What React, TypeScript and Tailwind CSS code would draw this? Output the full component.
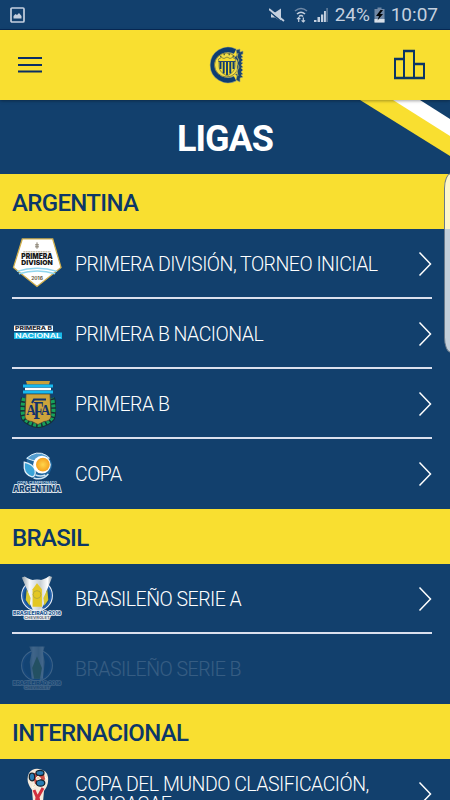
import type { ReactNode } from "react"

type League = {
  name: string
  logo: ReactNode
  disabled?: boolean
}

type Section = {
  title: string
  leagues: League[]
}

function ClubCrest() {
  return (
    <svg className="ml-px" width="36" height="38" viewBox="0 0 36 38" fill="none">
      <path d="M27 5.500A15.200 15.200 0 1 0 27 32.500" stroke="#8d9a7c" strokeWidth="6" />
      <path d="M27 5.500A15.200 15.200 0 1 0 27 32.500" stroke="#0d3d72" strokeWidth="4.600" />
      <circle cx="18.500" cy="19" r="12" fill="#f4df45" stroke="#857f40" strokeWidth="1" />
      <path d="M10.500 13l3-1.500 2.500 1 3-1.500 3 1.500 2.500-1 3 1.500c-1 4 0 7-1 10-1 3-4 5-7.500 7-3.500-2-6.500-4-7.500-7-1-3 0-6-1-10z" fill="#f9df30" stroke="#6d7545" strokeWidth=".8" />
      <path d="M12.500 16v7M15.700 16v11.500M19 16v13M22.300 16v11.500M25.500 16v7" stroke="#0d3d72" strokeWidth="1.900" />
      <path d="M10.500 15.500h17" stroke="#24466e" strokeWidth="1" />
      <path d="M12 10.500h1.500M15.500 8.500h1.500M20.500 8.500H22M24.500 10.500H26" stroke="#55683f" strokeWidth="1.500" />
      <path d="M28 4l4-1v3l3-1v3l-2 1 2 2-2 1 2 2-2 2 2 1-2 2 2 2-2 1 2 2-2 2 2 2-2 1 2 2-3 1v4l-4-2 1-4-2-2h2V14l-3-2 3-3z" fill="#1c456d" stroke="#a3a674" strokeWidth=".6" />
      <path d="M30 7l-1 4 2 3-2 3 2 4-2 4 1 5" stroke="#cfc354" strokeWidth=".8" />
    </svg>
  )
}

function PrimeraDivisionLogo() {
  return (
    <svg width="52" height="52" viewBox="0 0 52 52">
      <path d="M10.500 1.500h31L50 30.500 25.500 50 1.500 30.500z" fill="#fff" stroke="#d3b04c" strokeWidth="1.300" />
      <path d="M25.500 5v6.500M23.500 7.500h4M23.500 9.500h4" stroke="#827968" strokeWidth="1" />
      <path d="M11.500 14.500h28" stroke="#c6bca6" strokeWidth="1.400" strokeDasharray="2 .5" />
      <text x="25.500" y="22" fontSize="7.200" fontWeight="900" textAnchor="middle" textLength="32" lengthAdjust="spacingAndGlyphs" fill="#171717" fontFamily="Inter">PRIMERA</text>
      <text x="25.500" y="28" fontSize="6.800" fontWeight="900" textAnchor="middle" textLength="32" lengthAdjust="spacingAndGlyphs" fill="#171717" fontFamily="Inter">DIVISION</text>
      <path d="M5 34.500q20.500-6.500 41 0M7 37q19-5.500 37 0" fill="none" stroke="#8fd5ed" strokeWidth="1.500" />
      <text x="25.500" y="43.500" fontSize="5" fontWeight="700" textAnchor="middle" textLength="12" lengthAdjust="spacingAndGlyphs" fill="#65573d" fontFamily="Inter">2016</text>
    </svg>
  )
}

function PrimeraNacionalLogo() {
  return (
    <svg className="mb-[3px]" width="50" height="16" viewBox="0 0 50 16">
      <rect x="1" y="1.500" width="39" height="5.500" fill="#fff" />
      <rect x="1" y="8.500" width="48" height="6.500" fill="#18b9e8" />
      <text x="2" y="6" fontSize="4.800" fontWeight="800" textLength="37" lengthAdjust="spacingAndGlyphs" fill="#1b2937" fontFamily="Inter">PRIMERA B</text>
      <text x="2" y="13.800" fontSize="5.500" fontWeight="600" textLength="46" lengthAdjust="spacingAndGlyphs" fill="#fff" fontFamily="Inter">NACIONAL</text>
    </svg>
  )
}

function AfaLogo() {
  return (
    <svg className="mt-px" width="36" height="48" viewBox="0 0 36 48">
      <path d="M4 18Q1 30 4 38q5 6 14 7 9-1 14-7 3-8 0-20" fill="none" stroke="#172e36" strokeWidth="6" />
      <path d="M4 18Q1 30 4 38q5 6 14 7 9-1 14-7 3-8 0-20" fill="none" stroke="#16a05a" strokeWidth="4" strokeDasharray="3 1.500" />
      <path d="M6 1h24l-1 3.500H7z" fill="#c9a039" />
      <path d="M6 14h24l1 23q-1 4-7 4.500l-6 3-6-3q-6-.5-7-4.500z" fill="#cda43b" stroke="#473f32" strokeWidth=".7" />
      <path d="M3 6h30M3 12h30" stroke="#16b9ef" strokeWidth="2.800" />
      <path d="M5 9h26" stroke="#fff" strokeWidth="2.400" />
      <g fontFamily="Liberation Serif" fontWeight="700" fill="#12326c" textAnchor="middle">
        <text x="11" y="35" fontSize="15" textLength="9.500" lengthAdjust="spacingAndGlyphs">A</text>
        <text x="25.500" y="35" fontSize="15" textLength="9.500" lengthAdjust="spacingAndGlyphs">A</text>
        <text x="18.500" y="38.500" fontSize="26" textLength="10" lengthAdjust="spacingAndGlyphs">F</text>
      </g>
      <path d="M12 23l2-3.500h12" fill="none" stroke="#12326c" strokeWidth="2" />
    </svg>
  )
}

function CopaLogo() {
  return (
    <svg width="52" height="44" viewBox="0 0 52 44">
      <defs>
        <radialGradient id="sun">
          <stop offset="0" stopColor="#ffd64c" />
          <stop offset="1" stopColor="#f5a11e" />
        </radialGradient>
      </defs>
      <path d="M15 6Q22 0 31 2q8 3 10 11-1 9-7 14-9 3-15-1l-6-7 2-7z" fill="#20669c" />
      <path d="M15 7Q25-2 35 4q3 2 3 3-9-3-14 3-4-1-9-3z" fill="#549ed0" stroke="#e2f0fa" strokeWidth="1" />
      <path d="M12.500 11q9 2 11 8 1 6-3 7-7-2-8-9z" fill="#3aa4d8" stroke="#e2f0fa" strokeWidth="1.300" />
      <path d="M22 27q9 3 15-4M24 24q5 2 10 0" fill="none" stroke="#d1e4f1" strokeWidth="1.600" />
      <circle cx="30.500" cy="13.500" r="9" fill="#fff" />
      <circle cx="31.500" cy="13.500" r="7" fill="url(#sun)" />
      <g fontFamily="Inter" fontWeight="700" textAnchor="middle">
        <text x="25.500" y="33" fontSize="4" textLength="41" lengthAdjust="spacingAndGlyphs" fill="#b8d5e9">COPA CAMPEONATO</text>
        <text x="25.500" y="41" fontSize="8.500" fontWeight="900" textLength="49" lengthAdjust="spacingAndGlyphs" fill="#15426f" stroke="#dce5ec" strokeWidth="1.800" paintOrder="stroke">ARGENTINA</text>
      </g>
    </svg>
  )
}

function BrasileiraoLogo({ serieB }: { serieB?: boolean }) {
  return (
    <svg width="52" height="48" viewBox="0 0 52 48">
      <defs>
        <linearGradient id="cup" x2="1">
          <stop stopColor="#8e9ba5" />
          <stop offset=".25" stopColor="#f8fafb" />
          <stop offset=".6" stopColor="#c6ced3" />
          <stop offset=".85" stopColor="#fff" />
          <stop offset="1" stopColor="#88959f" />
        </linearGradient>
      </defs>
      <circle cx="25.500" cy="21.500" r="14.500" fill="none" stroke="#e8eef6" strokeWidth="3.500" />
      <circle cx="25.500" cy="21.500" r="14.300" fill="#14518d" stroke="#2462ad" strokeWidth="1.800" />
      {serieB ? (
        <>
          <path d="M17.500 2h16l-2 6 2 10-2 17H20l-2-17 2-10z" fill="url(#cup)" />
          <path d="M25.500 12l5 12-2 11h-6l-2-11z" fill="#668f38" />
        </>
      ) : (
        <>
          <path d="M10 3l3-1q6 4 12.500 4T38 1.500l3 1-6 15-2.500 13-3 6h-8l-3-6L16 17z" fill="url(#cup)" />
          <path d="M15 15l-1 11 4 6 1-8zM36 15l1 11-4 6-1-8z" fill="#d7c832" />
          <path d="M25.500 9l5 6v18H21V15z" fill="#e3c724" />
          <circle cx="25.500" cy="20.500" r="4" fill="none" stroke="#b7aa37" strokeWidth="1" />
        </>
      )}
      <g textAnchor="middle" fontFamily="Inter" fontWeight="800" fill="#22568f" stroke="#f1f4f8" strokeWidth="1.700" paintOrder="stroke">
        <text x="25.500" y="41" fontSize="5.500" textLength="49" lengthAdjust="spacingAndGlyphs">BRASILEIRÃO 2016</text>
        <text x="25.500" y="45.600" fontSize="4" textLength="26" lengthAdjust="spacingAndGlyphs" fill="#68707b">CHEVROLET</text>
      </g>
    </svg>
  )
}

function WorldCupLogo() {
  return (
    <svg className="mt-[2px]" width="22" height="52" viewBox="0 0 22 52">
      <path d="M2 5q4-5 10-4 8 1 9 8 1 8-4 14l-1 11 3 15H4l2-15-1-12Q-2 13 2 5z" fill="#f5eadc" />
      <path d="M7 5l10 1 1 5-3 6-7-1-2-8z" fill="#cb4c42" />
      <path d="M7 22l3 7-2 19M16 20l-5 9 3 17" fill="none" stroke="#d22f3e" strokeWidth="3" />
      <g fill="#287bb2" stroke="#14232e" strokeWidth="1.300">
        <ellipse cx="13" cy="5" rx="4" ry="2.600" />
        <ellipse cx="5" cy="9" rx="2.700" ry="3.800" />
        <ellipse cx="13.500" cy="15" rx="4.300" ry="3.200" />
      </g>
      <path d="M9 10l2-2 3 2.500-4 1.500zM6.500 16l-1 4 3-2M18 9l2 2" fill="#efd9a8" stroke="#fff" strokeWidth=".8" />
    </svg>
  )
}

const sections: Section[] = [
  {
    title: "ARGENTINA",
    leagues: [
      { name: "PRIMERA DIVISIÓN, TORNEO INICIAL", logo: <PrimeraDivisionLogo /> },
      { name: "PRIMERA B NACIONAL", logo: <PrimeraNacionalLogo /> },
      { name: "PRIMERA B", logo: <AfaLogo /> },
      { name: "COPA", logo: <CopaLogo /> },
    ],
  },
  {
    title: "BRASIL",
    leagues: [
      { name: "BRASILEÑO SERIE A", logo: <BrasileiraoLogo /> },
      { name: "BRASILEÑO SERIE B", logo: <BrasileiraoLogo serieB />, disabled: true },
    ],
  },
  {
    title: "INTERNACIONAL",
    leagues: [{ name: "COPA DEL MUNDO CLASIFICACIÓN, CONCACAF", logo: <WorldCupLogo /> }],
  },
]

function StatusBar() {
  return (
    <div className="flex h-[30px] shrink-0 items-center border-b border-[#082a58] pl-[10px] pr-[12px] font-[Roboto] text-[19px] text-[#c5d0df]">
      <svg width="15" height="16" viewBox="0 0 15 16">
        <rect x="1" y="1" width="13" height="14" rx="1" fill="none" stroke="currentColor" strokeWidth="1.700" />
        <path d="M3.500 11.500V9l2-2 1.500 1 2-2 2.500 3v2.500z" fill="currentColor" />
      </svg>
      <div className="ml-auto flex items-center">
        <svg className="mr-[9px] ml-px" width="16" height="16" viewBox="0 0 16 16">
          <path d="M2 5.500h4l6-4v13l-6-4H2z" fill="currentColor" />
          <path d="M0 4l14 12" stroke="#12406d" strokeWidth="1.500" />
          <path d="M0 2l15 12" stroke="currentColor" strokeWidth="1.800" />
        </svg>
        <svg className="mr-[5px]" width="14" height="16" viewBox="0 0 14 16" fill="none" stroke="currentColor">
          <path d="M1 4q6-5 12 0" stroke="#7189a6" strokeWidth="1.600" />
          <path d="M3 7q4-3.500 8 0M5 9.500q2-2 4 0" strokeWidth="1.600" />
          <path d="M4.700 15v-4.500M3 12.200l1.700-1.700 1.700 1.700M9.300 10.500V15M7.600 13.300L9.300 15l1.700-1.700" strokeWidth="1.200" />
        </svg>
        <svg className="mr-[6px]" width="16" height="16" viewBox="0 0 16 16">
          <path d="M1 15v-2h2.500v2zM4.500 15v-5H7v5zM8 15V7.500h2.300V15zM11 15V4h1.900v11z" fill="currentColor" />
          <path d="M13.200 15V1H15v14z" fill="#587594" />
        </svg>
        <span className="mr-[4px] w-[35px] whitespace-nowrap leading-none">24%</span>
        <svg className="mr-[6px]" width="11" height="16" viewBox="0 0 11 16">
          <path d="M.5 2h3V.5h4V2h3v13.500H.5z" fill="#7188a5" />
          <path d="M.5 12h10v3.500H.5z" fill="#d8e0e9" />
          <path d="M6.500 3L2 9h3l-1.500 4.500L9 7H6l3-4z" fill="#030609" />
        </svg>
        <span className="leading-none">10:07</span>
      </div>
    </div>
  )
}

function LeagueRow({ league, last }: { league: League; last: boolean }) {
  return (
    <div className="pl-3 pr-[18px]">
      <div className={`flex h-[70px] items-center border-b-2 ${last ? "border-transparent" : "border-[#dbe0ee]"}`}>
        <div className={`flex w-[63px] shrink-0 ${league.disabled ? "opacity-20" : ""}`}>
          <div className="flex w-[51px] justify-center">{league.logo}</div>
        </div>
        <div className={`min-w-0 flex-1 pt-[4px] text-[19.5px] font-light leading-[20px] tracking-[-0.5px] text-white ${league.disabled ? "opacity-15" : ""}`}>
          {league.name}
        </div>
        {!league.disabled && (
          <svg className="mt-[1px] shrink-0" width="14" height="26" viewBox="0 0 14 26" fill="none">
            <path d="M1.500 1.500L12.500 13 1.500 24.500" stroke="#fff" strokeWidth="1.500" />
          </svg>
        )}
      </div>
    </div>
  )
}

export default function App() {
  return (
    <div className="relative flex h-[800px] w-[450px] flex-col overflow-hidden bg-[#12406d] font-[Roboto,sans-serif]">
      <StatusBar />

      {/* Toolbar */}
      <header className="z-10 flex h-[70px] shrink-0 items-center justify-between bg-[#f9df30] px-[18px] shadow-[0_1px_3px_rgba(0,0,0,0.35)]">
        <svg width="40" height="18" viewBox="0 0 40 18">
          <path d="M0 2h24M0 9h24M0 15.500h24" stroke="#0a2e65" strokeWidth="2" />
        </svg>
        <ClubCrest />
        <div className="flex w-[40px] justify-end pr-[6px]">
          <svg className="shrink-0" width="33" height="32" viewBox="0 0 33 32" fill="none" stroke="#0b3566" strokeWidth="2">
            <path d="M2 10h9v19H2zM11 2h10v27H11zM21 15h10v14H21z" />
            <path d="M1 29h31M1 10h10M10 2h12M21 15h11" strokeWidth="2.500" />
          </svg>
        </div>
      </header>

      {/* Title */}
      <div className="relative flex h-[74px] shrink-0 items-center justify-center pt-[3px]">
        <svg className="absolute right-0 top-0" width="90" height="56" viewBox="0 0 90 56">
          <path d="M0 0h35l55 34v22z" fill="#f9df30" />
          <path d="M33 0h27l30 19v17z" fill="#fff" />
        </svg>
        <h1 className="text-[36px] font-bold leading-none tracking-[-1px] text-white">LIGAS</h1>
      </div>

      {sections.map((section) => (
        <section key={section.title} className="shrink-0">
          <h2 className="flex h-[55px] items-center bg-[#f9df30] pl-3 pt-[2px] text-[24px] font-medium tracking-[-0.65px] text-[#0c3768]">
            {section.title}
          </h2>
          {section.leagues.map((league, i) => (
            <LeagueRow key={league.name} league={league} last={i === section.leagues.length - 1} />
          ))}
        </section>
      ))}

      {/* Edge panel handle */}
      <div className="absolute right-[-8px] top-[173px] h-[180px] w-[14px] rounded-[10px/22px] border border-[#69798a] bg-white/75" />
    </div>
  )
}
